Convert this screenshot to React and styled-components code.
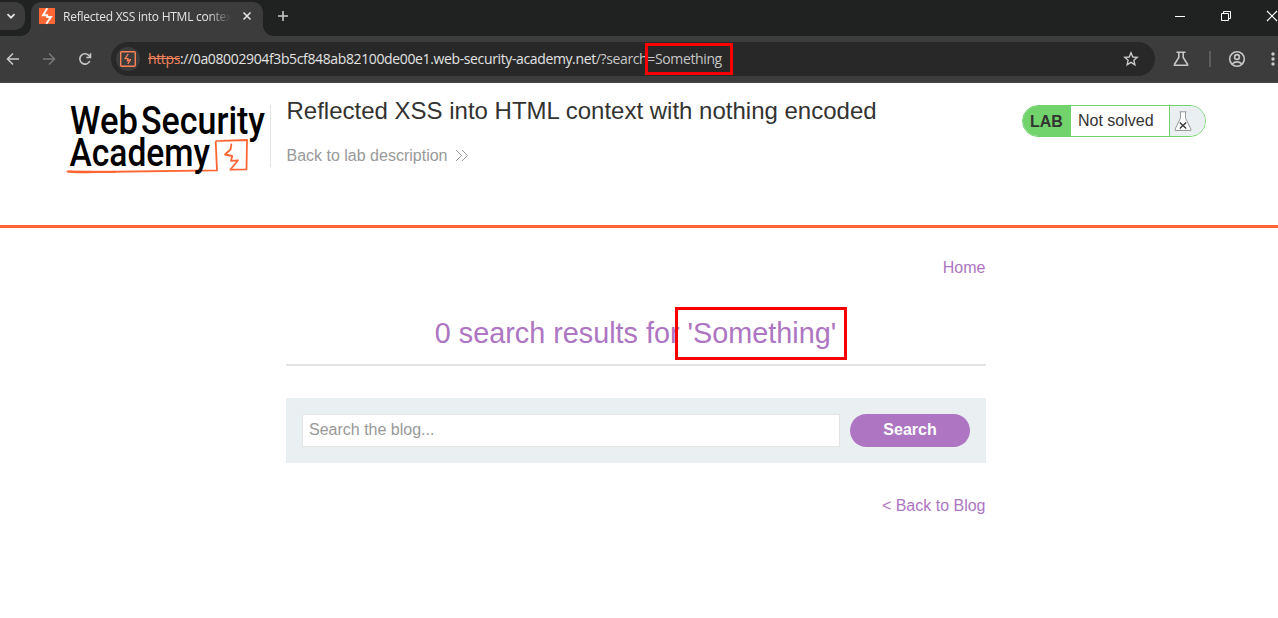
import React from "react";
import styled, { createGlobalStyle } from "styled-components";

const Global = createGlobalStyle`
  *, *::before, *::after { box-sizing: border-box; }
  body { margin: 0; background: #fff; overflow: hidden; font-family: "Liberation Sans", Arial, sans-serif; color: #333332; }
  svg { display: block; flex: none; overflow: visible; }
`;

const Window = styled.div`
  width: 100%;
  height: 618px;
  overflow: hidden;
`;

const TabStrip = styled.div`
  display: flex;
  height: 36px;
  background: #202221;
`;

const TabSearch = styled.div`
  width: 25px;
  height: 28px;
  margin: 2px 6px 0 0;
  padding-left: 5px;
  display: flex;
  align-items: center;
  border-radius: 0 10px 10px 0;
  background: #3c3c3c;
`;

const Tab = styled.div`
  position: relative;
  width: 232px;
  height: 34px;
  margin-top: 2px;
  padding: 0 9px 6px 8px;
  display: flex;
  align-items: center;
  border-radius: 10px 10px 0 0;
  background: #3c3c3c;

  &::before, &::after {
    content: "";
    position: absolute;
    bottom: 0;
    width: 10px;
    height: 10px;
  }
  &::before { left: -10px; background: radial-gradient(circle at 0 0, transparent 9.5px, #3c3c3c 10px); }
  &::after { right: -10px; background: radial-gradient(circle at 100% 0, transparent 9.5px, #3c3c3c 10px); }
`;

const TabTitle = styled.div`
  width: 168px;
  margin: 1px 11px 0 8px;
  overflow: hidden;
  white-space: nowrap;
  font: 12px/18px "Open Sans", "Noto Sans", sans-serif;
  letter-spacing: -0.25px;
  color: #e3e3e3;
  mask-image: linear-gradient(to right, #000 145px, transparent 168px);
`;

const NewTab = styled.div`
  margin: 10px 0 0 14px;
`;

const WindowControls = styled.div`
  display: flex;
  margin: 10px 0 0 auto;
  gap: 34px;
`;

const Toolbar = styled.div`
  display: flex;
  align-items: center;
  height: 47px;
  padding: 0 0 1px 5px;
  background: #3c3c3c;
  border-bottom: 1px solid #474747;
`;

const NavIcons = styled.div`
  display: flex;
  flex: none;
  gap: 20px;
  width: 106px;
`;

const Omnibox = styled.div`
  display: flex;
  flex: none;
  align-items: center;
  width: 1044px;
  height: 34px;
  padding: 0 16px 0 5px;
  border-radius: 17px;
  background: #282828;
`;

const SiteChip = styled.div`
  width: 24px;
  height: 24px;
  display: grid;
  place-items: center;
  border-radius: 50%;
  background: #3c3c3c;
`;

const Url = styled.div`
  flex: 1;
  margin-left: 8px;
  white-space: nowrap;
  font: 14px/20px "Open Sans", "Noto Sans", sans-serif;
  letter-spacing: ${(p) => p.$track}px;
  color: #e3e3e3;
`;

const Scheme = styled.span`
  color: #f5845f;
  text-decoration: line-through;
`;

const Path = styled.span`
  color: #c7c7c7;
`;

const Marked = styled.span`
  position: relative;
  &::after {
    content: "";
    position: absolute;
    left: ${(p) => p.$box[0]}px;
    top: ${(p) => p.$box[1]}px;
    width: ${(p) => p.$box[2]}px;
    height: ${(p) => p.$box[3]}px;
    border: 3px solid #f80000;
  }
`;

const ToolIcons = styled.div`
  display: flex;
  flex: none;
  align-items: center;
  margin-left: 16px;
`;

const Divider = styled.div`
  width: 2px;
  height: 16px;
  margin: 0 17px 0 18px;
  background: #5c5c5c;
`;

const MenuDots = styled.svg`
  margin-left: 18px;
`;

const LabHeader = styled.header`
  display: flex;
  align-items: flex-start;
  height: 145px;
  padding: 17px 72px 0 60px;
  border-bottom: 3px solid #ff6633;
`;

const LogoCell = styled.div`
  width: 210px;
  height: 66px;
  display: flex;
`;

const TitleCell = styled.div`
  height: 62px;
  margin-top: 5px;
  padding-left: 15.5px;
  border-left: 1px solid #e4e4e4;
`;

const LabTitle = styled.h2`
  margin: -9px 0 0;
  font-size: 24px;
  line-height: 30px;
  font-weight: 400;
  white-space: nowrap;
`;

const LabLink = styled.a`
  display: flex;
  align-items: center;
  gap: 8px;
  margin-top: 20px;
  font-size: 16px;
  line-height: 20px;
  color: #999;
`;

const Status = styled.div`
  display: flex;
  width: 184px;
  height: 32px;
  margin: 5px 0 0 auto;
  border: 1px solid #72d36d;
  border-radius: 16px;
  overflow: hidden;
  font-size: 16px;
  line-height: 30px;
`;

const StatusLabel = styled.div`
  width: 48px;
  padding: 1px 0 0 7px;
  font-weight: 700;
  background: #72d36d;
`;

const StatusText = styled.div`
  width: 98px;
  padding-left: 7px;
  line-height: 29px;
`;

const StatusFlask = styled.div`
  flex: 1;
  padding: 5px 0 0 4px;
  border-left: 1px solid #72d36d;
  background: #eaeff2;
`;

const Blog = styled.main`
  width: 700px;
  margin: 0 auto 0 286px;
  color: #ad75c2;
`;

const BlogLink = styled.div`
  padding-right: 0.5px;
  text-align: right;
  font-size: 16px;
  line-height: 20px;
  margin-top: ${(p) => p.$top}px;
`;

const Results = styled.h1`
  height: 50px;
  margin: 38px 0 32px;
  padding-right: 1px;
  border-bottom: 2px solid #e4e4e4;
  text-align: center;
  font-size: 28.8px;
  line-height: 34px;
  font-weight: 400;
`;

const SearchBar = styled.section`
  display: flex;
  gap: 10px;
  height: 65px;
  padding: 16px;
  background: #eaeff2;
`;

const SearchInput = styled.input`
  width: 538px;
  height: 33px;
  padding: 0 6px 2px;
  border: 1px solid #e4e4e4;
  border-radius: 0;
  outline: 0;
  background: #fff;
  font: 16px "Liberation Sans", Arial, sans-serif;
  &::placeholder { color: #999; opacity: 1; }
`;

const SearchButton = styled.button`
  width: 120px;
  height: 33px;
  padding: 0 0 2px;
  border: 0;
  border-radius: 17px;
  background: #ad75c2;
  color: #fff;
  font: 700 16px "Liberation Sans", Arial, sans-serif;
`;

const Line = ({ size = 16, color = "#c7c7c7", w = 1.6, d, ...rest }) => (
  <svg width={size} height={size} viewBox={`0 0 ${size} ${size}`} fill="none" stroke={color} strokeWidth={w} {...rest}>
    <path d={d} />
  </svg>
);

const Logo = () => (
  <svg width="210" height="80" viewBox="60 100 210 80">
    <g fill="none" stroke="#ff6633" strokeWidth="1.8" strokeLinejoin="round" strokeLinecap="round">
      <path d="M67.5 171.5Q75 172.8 95 172L217 170.3L215.7 141.5Q216 140.8 220 140.8L247 140L246.5 169.3L230.3 169.7L238 160.3L231 160.8L232.3 156L225 154.5L230.5 149.5L231.3 144.5" />
      <path d="M69 171.5L115 172" strokeWidth="2" />
    </g>
    <g fill="#000" fontFamily="Roboto, sans-serif" fontWeight="500" fontSize="38">
      <text x="70" y="134" textLength="68" lengthAdjust="spacingAndGlyphs">Web</text>
      <text x="141" y="134" textLength="124" lengthAdjust="spacingAndGlyphs">Security</text>
      <text x="69.5" y="166.3" textLength="140.5" lengthAdjust="spacingAndGlyphs">Academy</text>
    </g>
  </svg>
);

export default function App() {
  return (
    <Window>
      <Global />
      <TabStrip>
        <TabSearch><Line size={12} color="#e3e3e3" w={1.8} d="M2.5 4.2L6 7.7L9.5 4.2" /></TabSearch>
        <Tab>
          <svg width="16" height="16" viewBox="0 0 16 16">
            <path fill="#ff6633" d="M0 0H16V16H0Z" />
            <path fill="none" stroke="#fff" strokeWidth="1.9" d="M8.3 0.3L4 7.3H8.2V9H12L7.3 15.700" />
          </svg>
          <TabTitle>Reflected XSS into HTML context with nothing encoded</TabTitle>
          <Line size={10} color="#e3e3e3" d="M1.5 1.5L8.5 8.5M8.5 1.5L1.5 8.5" />
        </Tab>
        <NewTab><Line size={12} w={1.6} d="M6 1V11M1 6H11" /></NewTab>
        <WindowControls>
          <Line size={12} color="#fff" w={1} d="M1 6.5H11" />
          <Line size={12} color="#fff" w={1} d="M1.5 3.5H8.5V10.5H1.5ZM3.5 3.5V1.5H10.5V8.5H8.5" />
          <Line size={12} color="#fff" w={1.1} d="M1 1L11 11M11 1L1 11" />
        </WindowControls>
      </TabStrip>
      <Toolbar>
        <NavIcons>
          <Line d="M14 8H3M8 2.5L2.5 8L8 13.5" />
          <Line color="#777" d="M2 8H13M8 2.5L13.5 8L8 13.5" />
          <Line d="M12.8 10A5.2 5.2 0 1 1 12.2 4.8L13.3 6.2M13.5 2.2V6.5H9.3" />
        </NavIcons>
        <Omnibox>
          <SiteChip>
            <svg width="16" height="16" viewBox="0 0 16 16" fill="none" stroke="#ff8055" strokeWidth="1.4" strokeLinejoin="round">
              <rect x=".7" y=".7" width="14.6" height="14.6" rx="1" />
              <path d="M8.2 3L5 7.6H8.2L7.3 10L10.5 8.6L7.8 13" strokeWidth="1.3" />
            </svg>
          </SiteChip>
          <Url $track={-0.37}>
            <Scheme>https</Scheme>://0a08002904f3b5cf848ab82100de00e1.web-security-academy.net<Path>/?search<Marked $box={[-2.5, -6, 88, 32]}>=Something</Marked></Path>
          </Url>
          <Line d="M8 1.8L9.8 6L14.2 6.4L10.9 9.3L11.9 13.7L8 11.4L4.1 13.7L5.1 9.3L1.8 6.4L6.2 6Z" w={1.4} />
        </Omnibox>
        <ToolIcons>
          <Line size={20} d="M5.5 3.3H14.5M7.8 3.5V8.5L3.5 15.2V16.2H16.5V15.2L12.2 8.5V3.5" w={1.6} />
          <Divider />
          <svg width="18" height="18" viewBox="0 0 18 18" fill="none" stroke="#c7c7c7" strokeWidth="1.6">
            <circle cx="9" cy="9" r="7.3" />
            <circle cx="9" cy="7" r="2.4" />
            <path d="M4 14Q9 9.8 14 14" />
          </svg>
          <MenuDots width="18" height="18" viewBox="0 0 18 18" fill="#c7c7c7">
            <circle cx="9" cy="4" r="1.7" /><circle cx="9" cy="9" r="1.7" /><circle cx="9" cy="14" r="1.7" />
          </MenuDots>
        </ToolIcons>
      </Toolbar>
      <LabHeader>
        <LogoCell><Logo /></LogoCell>
        <TitleCell>
          <LabTitle>Reflected XSS into HTML context with nothing encoded</LabTitle>
          <LabLink>Back to lab description <Line size={12} color="#999" w={1} d="M1 0L6.5 5.5L1 11M7 0L12.5 5.5L7 11" /></LabLink>
        </TitleCell>
        <Status>
          <StatusLabel>LAB</StatusLabel>
          <StatusText>Not solved</StatusText>
          <StatusFlask>
            <svg width="18" height="20" viewBox="0 0 18 20" fill="#fff" stroke="#999" strokeWidth="1">
              <path d="M5.5 0.8H12.5M6.5 1V7L1.2 18V19.5H16.8V18L11.5 7V1" />
              <path d="M5.8 11.5L12.2 17.5M12.2 11.5L5.8 17.5" stroke="#333" strokeWidth="1.3" />
            </svg>
          </StatusFlask>
        </Status>
      </LabHeader>
      <Blog>
        <BlogLink $top={30}>Home</BlogLink>
        <Results>0 search results for <Marked $box={[-12.5, -10, 172, 53]}>'Something'</Marked></Results>
        <SearchBar>
          <SearchInput placeholder="Search the blog..." />
          <SearchButton>Search</SearchButton>
        </SearchBar>
        <BlogLink $top={33}>&lt; Back to Blog</BlogLink>
      </Blog>
    </Window>
  );
}
